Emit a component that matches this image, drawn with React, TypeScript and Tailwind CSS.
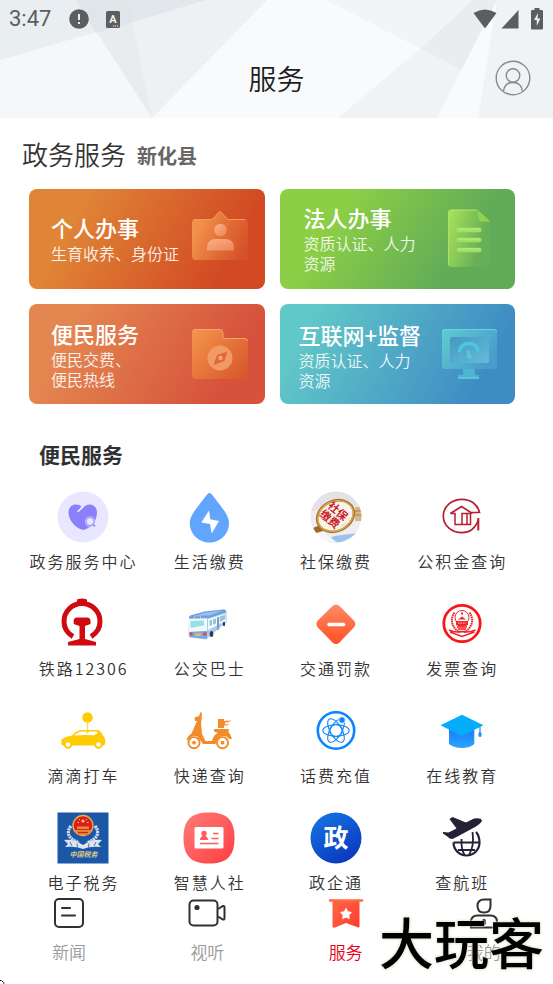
import type { ReactNode } from 'react'

const heroCards = [
  {
    title: '个人办事',
    lines: ['生育收养、身份证'],
    className: 'pl-[22px] bg-[linear-gradient(118deg,#e08536_20%,#d24a24_82%)]',
    icon: <PersonCardIcon />,
  },
  {
    title: '法人办事',
    lines: ['资质认证、人力', '资源'],
    className: 'pl-6 bg-[linear-gradient(124deg,#8ccf46_24%,#60aa58_76%)]',
    icon: <DocumentIcon />,
  },
  {
    title: '便民服务',
    lines: ['便民交费、', '便民热线'],
    className: 'pl-[22px] pt-0.5 bg-[linear-gradient(118deg,#e48650_18%,#d6523c_82%)]',
    icon: <FolderIcon />,
  },
  {
    title: '互联网+监督',
    lines: ['资质认证、人力', '资源'],
    className: 'pl-[19px] pt-1 bg-[linear-gradient(118deg,#61c8c8_12%,#3f8cc4_84%)]',
    icon: <MonitorIcon />,
  },
]

const services: { label: string; icon: ReactNode }[] = [
  { label: '政务服务中心', icon: <HeartIcon /> },
  { label: '生活缴费', icon: <DropIcon /> },
  { label: '社保缴费', icon: <SocialIcon /> },
  { label: '公积金查询', icon: <FundIcon /> },
  { label: '铁路12306', icon: <RailwayIcon /> },
  { label: '公交巴士', icon: <BusIcon /> },
  { label: '交通罚款', icon: <FineIcon /> },
  { label: '发票查询', icon: <InvoiceIcon /> },
  { label: '滴滴打车', icon: <TaxiIcon /> },
  { label: '快递查询', icon: <ScooterIcon /> },
  { label: '话费充值', icon: <AtomIcon /> },
  { label: '在线教育', icon: <CapIcon /> },
  { label: '电子税务', icon: <TaxIcon /> },
  { label: '智慧人社', icon: <IdCardIcon /> },
  { label: '政企通', icon: <GovIcon /> },
  { label: '查航班', icon: <FlightIcon /> },
]

const tabs = [
  { label: '新闻', icon: <NewsTabIcon />, active: false },
  { label: '视听', icon: <VideoTabIcon />, active: false },
  { label: '服务', icon: <ServiceTabIcon />, active: true },
  { label: '我的', icon: <MineTabIcon />, active: false },
]

function Tile({ children }: { children: ReactNode }) {
  return (
    <svg viewBox="0 0 52 52" className="w-[52px] h-[52px]" aria-hidden="true">
      {children}
    </svg>
  )
}

/* Hero card icons */

function PersonCardIcon() {
  return (
    <svg viewBox="0 0 56 60" className="w-14 h-[60px]" aria-hidden="true">
      <defs>
        <linearGradient id="pc" x1="0" y1="0.3" x2="1" y2="0.7">
          <stop offset="0.1" stopColor="#f2914a" />
          <stop offset="0.6" stopColor="#e06a35" />
          <stop offset="1" stopColor="#d65128" />
        </linearGradient>
        <linearGradient id="pp" x1="0" y1="0" x2="1" y2="1">
          <stop offset="0" stopColor="#fbb086" />
          <stop offset="1" stopColor="#ee8455" />
        </linearGradient>
      </defs>
      <path d="M4 10H20L28 2L36 10H52Q56 10 56 14V47Q56 51 52 51H4Q0 51 0 47V14Q0 10 4 10Z" fill="url(#pc)" />
      <path d="M2 10.500H20L28 2.500L36 10.500H53" fill="none" stroke="#f49a54" strokeWidth="1" />
      <circle cx="28.500" cy="21" r="6.200" fill="url(#pp)" />
      <path d="M15 41.500V39Q15 30 24 30H33Q42 30 42 39V41.500Z" fill="url(#pp)" />
    </svg>
  )
}

function DocumentIcon() {
  return (
    <svg viewBox="0 0 56 60" className="w-14 h-[60px]" aria-hidden="true">
      <defs>
        <linearGradient id="dc" x1="0" y1="0.2" x2="1" y2="0.6">
          <stop offset="0" stopColor="#a6df5c" />
          <stop offset="0.8" stopColor="#68b055" />
          <stop offset="1" stopColor="#66ae58" />
        </linearGradient>
      </defs>
      <path d="M9 0.500H36V12H48.500V55Q48.500 58 45 58H9Q6 58 6 55V4Q6 0.500 9 0.500Z" fill="url(#dc)" />
      <path d="M6.500 56V4Q6.500 1 10 1H35" fill="none" stroke="#a9e362" strokeWidth="1" />
      <path d="M36 1L48.500 12.500H40Q36 12.500 36 9Z" fill="#8fd152" />
      <path d="M16.500 21H37.500M16.500 31H37.500M16.500 41H37.500" stroke="#9fdf66" strokeWidth="4.300" strokeLinecap="round" />
      <path d="M16.500 20H37.500M16.500 30H37.500M16.500 40H37.500" stroke="#b0e97c" strokeWidth="1.500" strokeLinecap="round" />
    </svg>
  )
}

function FolderIcon() {
  return (
    <svg viewBox="0 0 56 60" className="w-14 h-[60px]" aria-hidden="true">
      <defs>
        <linearGradient id="fc" x1="0" y1="0.1" x2="1" y2="0.9">
          <stop offset="0" stopColor="#f2934a" />
          <stop offset="1" stopColor="#d9562c" />
        </linearGradient>
      </defs>
      <path d="M4 4H27Q31 4 31 8V13H52Q56 13 56 17V50Q56 54 52 54H4Q0 54 0 50V8Q0 4 4 4Z" fill="url(#fc)" />
      <path d="M1 7Q1 4.500 4 4.500H27Q31 4.500 31 8V13.500H52Q55 13.500 55.500 16" fill="none" stroke="#f5a468" strokeWidth="1" />
      <circle cx="28" cy="33" r="12.500" fill="#f29a66" />
      <path d="M35.500 26.500L32.500 36L21.500 40L25 30Z" fill="#de6a38" />
      <circle cx="28.500" cy="33" r="2.200" fill="#f7a878" />
    </svg>
  )
}

function MonitorIcon() {
  return (
    <svg viewBox="0 0 56 60" className="w-14 h-[60px]" aria-hidden="true">
      <defs>
        <linearGradient id="mc" x1="0" y1="0" x2="1" y2="0.6">
          <stop offset="0" stopColor="#60cdd2" />
          <stop offset="1" stopColor="#489ccc" />
        </linearGradient>
        <linearGradient id="ms" x1="0" y1="0" x2="1" y2="1">
          <stop offset="0" stopColor="#4597c2" />
          <stop offset="1" stopColor="#64bcd8" />
        </linearGradient>
      </defs>
      <path d="M21 42H33V49H37V52.500H16V49H21Z" fill="#4fb4d2" />
      <path d="M16.500 52H36.500" stroke="#5ccbe0" strokeWidth="1.500" strokeLinecap="round" />
      <rect x="0" y="3" width="55" height="40" rx="3" fill="url(#mc)" />
      <path d="M0.500 6Q0.500 3.500 3.500 3.500H51.500Q54.500 3.500 54.500 6" fill="none" stroke="#66d6dc" strokeWidth="1" />
      <rect x="8" y="11" width="39" height="26" rx="2" fill="url(#ms)" />
      <path d="M17.500 25Q19.500 17.500 27 17.500T36 24" fill="none" stroke="#4fc6de" strokeWidth="3.500" strokeLinecap="round" />
      <path d="M25.500 23L30 31Q28 35 25 31Z" fill="#52cbe0" />
    </svg>
  )
}

/* Service icons */

function HeartIcon() {
  return (
    <Tile>
      <circle cx="26" cy="26" r="25.500" fill="#e8e7ff" />
      <path d="M26 39C18 37 11.500 29 11.500 21.500C11.500 16 15.500 13.500 19 13.500C21.500 13.500 23.500 14.200 24.500 15.500L20 20.500L21 21.500L25.500 17.500C27.500 14.800 30 13.500 32.500 13.500C37 13.500 40 17 40 21.500C40 30 34 37.500 26 39Z" fill="#8b80fb" />
      <circle cx="33" cy="30.500" r="5.200" fill="#c4beff" />
      <circle cx="33" cy="30.500" r="4" fill="#e8e7ff" stroke="#9b91fc" strokeWidth="1" />
      <path d="M36 33.500L38 35.500" stroke="#8b80fb" strokeWidth="1.400" />
    </Tile>
  )
}

function DropIcon() {
  return (
    <Tile>
      <path d="M26.500 2C28 2 29.500 4 32 7.500C38 15.500 46 24 46 32C46 43.500 37 51.500 26.500 51.500S6.800 43.500 6.800 32C6.800 24 15 15.500 21 7.500C23.500 4 25 2 26.500 2Z" fill="#61a5ff" />
      <path d="M26 19.500L18.300 31.500L27 33L28.700 42.500L36 30L27.300 28.300Z" fill="#fff" />
    </Tile>
  )
}

function SocialIcon() {
  return (
    <Tile>
      <defs>
        <clipPath id="so">
          <circle cx="26" cy="26" r="25.500" />
        </clipPath>
      </defs>
      <g clipPath="url(#so)">
        <rect width="52" height="52" fill="#efedf1" />
        <path d="M0 0H52V17L30 12L0 21Z" fill="#e4e2e8" />
        <path d="M12 52L24 45L48 42L52 52Z" fill="#9cc2ec" />
        <path d="M0 34L14 42L28 52H0Z" fill="#f6f5f8" />
        <path d="M30 52L44 45L52 43V52Z" fill="#dfeaf8" />
        <rect x="45" y="16" width="7" height="14" fill="#d9b48c" />
        <path d="M45 20H52M45 24H52" stroke="#a98258" strokeWidth="1" />
        <path d="M3 37L10 34L13 40L6 42Z" fill="#9c6a24" />
        <ellipse cx="25.500" cy="25" rx="19" ry="15" transform="rotate(-25 25.500 25)" fill="#fbf4ec" stroke="#a87426" strokeWidth="2.600" />
        <ellipse cx="25.500" cy="25" rx="18.400" ry="14.600" transform="rotate(-25 25.500 25)" fill="none" stroke="#e2b659" strokeWidth="1" />
        <path d="M29 36Q38 35 41 23L37 31Z" fill="#ecd2b2" />
      </g>
      <g fill="#c81e28" fontSize="11" fontWeight="700" fontFamily="Noto Sans CJK SC, sans-serif" transform="rotate(40 24 24)">
        <text x="13.500" y="22.500">社保</text>
        <text x="12.500" y="34">缴费</text>
      </g>
    </Tile>
  )
}

function FundIcon() {
  return (
    <Tile>
      <g fill="none" stroke="#b5202f" strokeWidth="1.700">
        <path d="M36 21.500H43.500C41.500 13 34.500 8.300 26 8.300C15.500 8.300 7.300 15.500 7.300 25S15.500 41.700 26 41.700C33 41.700 39 38 42.500 29" />
        <path d="M42.300 27V39.500" strokeWidth="2" />
        <path d="M14.500 22.500L25.500 15.500L36.500 22.500" />
        <path d="M14.500 22.500H19V33.500H34.500V22.500H26V33.500M31 22.500V33.500" strokeWidth="1.500" />
      </g>
    </Tile>
  )
}

function RailwayIcon() {
  return (
    <Tile>
      <path d="M16 38.500C10 35 7 30 7 23.500C7 13.500 15 5.500 25 5.500S43 13.500 43 23.500C43 30 40 35 34 38.500" fill="none" stroke="#cf0a10" strokeWidth="5" />
      <path d="M20 1.500Q25 -0.500 30 1.500V5H20Z" fill="#cf0a10" />
      <path d="M20 19.500H30Q33.500 19.500 33.500 23V26L28 28V41L39 44V47.500H11V44L22.500 41V28L16.700 26V23Q16.700 19.500 20 19.500Z" fill="#cf0a10" />
    </Tile>
  )
}

function BusIcon() {
  return (
    <Tile>
      <path d="M6 20Q6 17.500 9 17L22 13.500L41 11.500Q43.500 11.500 43.500 14V24L27 38L23 41.500L7 39.500Q5.500 39 5.500 37Z" fill="#a9caf0" />
      <path d="M6 20Q6 17.500 9 17L22 13.500L41 11.500Q43 11.500 43.500 14L26 20L6 20.500Z" fill="#6f9fe0" />
      <path d="M10 18L23 14.500L40 12.500L27 17.500Z" fill="#98bff0" />
      <path d="M6 21L24 20.500V33L6 34Z" fill="#f2f9fd" />
      <path d="M7.500 23L21 22.500V27.500Q15 28 7.500 30Z" fill="#9adfe2" />
      <path d="M25 21L43 15.500V23L25 32Z" fill="#f4f8fc" />
      <path d="M26.500 22.500L29 21.700V27L26.500 28ZM30 21.500L33 20.500V25.500L30 26.700ZM37 18.500L42.500 16.500V21L37 24Z" fill="#8ec9d6" />
      <path d="M34 19.500L36.200 18.800V31L34 32.500Z" fill="#7c9cc8" />
      <path d="M6 34L24 33V41L7 39Z" fill="#7aa7e3" />
      <path d="M12 35.500H18V38H12Z" fill="#f0b64f" />
      <path d="M7 34.500H9.500V37.500H7ZM20.500 34.500H23.500V37.500H20.500Z" fill="#e0453c" />
      <ellipse cx="28.500" cy="36" rx="1.800" ry="3" fill="#333a4a" />
      <ellipse cx="41" cy="26" rx="1.200" ry="2.200" fill="#333a4a" />
      <path d="M11 19.300H18" stroke="#d6e5f8" strokeWidth="1.400" />
      <path d="M12 19.300H17" stroke="#39517d" strokeWidth="0.700" />
    </Tile>
  )
}

function FineIcon() {
  return (
    <Tile>
      <defs>
        <linearGradient id="fi" x1="0" y1="0" x2="0" y2="1">
          <stop offset="0" stopColor="#ff8a68" />
          <stop offset="1" stopColor="#ff5122" />
        </linearGradient>
      </defs>
      <path d="M22.500 8Q26 4.800 29.500 8L43.800 22.500Q47 26 43.800 29.500L29.500 44.500Q26 47.500 22.500 44.500L7.800 29.500Q4.800 26 7.800 22.500Z" fill="url(#fi)" />
      <path d="M19 26.500H33.500" stroke="#fff" strokeWidth="3.500" strokeLinecap="round" />
    </Tile>
  )
}

function InvoiceIcon() {
  return (
    <Tile>
      <circle cx="26" cy="25.500" r="18.200" fill="none" stroke="#f9161b" strokeWidth="2.800" />
      <g fill="none" stroke="#f0252a">
        <circle cx="26" cy="19.500" r="7" strokeWidth="1" />
        <path d="M18.500 14.500Q14.500 20 16.500 26T24 34M33.500 14.500Q37.500 20 35.500 26T28 34" strokeWidth="2" strokeDasharray="1.600 0.600" />
        <path d="M13 32Q19 35 26 33.500Q33 35 39.500 32M14 34L26 38.500L38.500 34" strokeWidth="1.500" />
        <path d="M21 29H31M22 31H30" strokeWidth="1.300" />
      </g>
      <path d="M20 23H32V27Q26 30 20 27Z" fill="#f0252a" />
      <path d="M22 21.500L26 18.500L30 21.500ZM25 14.500H27V16.500H25Z" fill="#f0252a" />
      <path d="M22 25H30" stroke="#fff" strokeWidth="0.800" strokeDasharray="1.500 1" />
    </Tile>
  )
}

function TaxiIcon() {
  return (
    <Tile>
      <circle cx="30.500" cy="12.500" r="5.200" fill="#ffcc00" />
      <path d="M30.500 17V27" stroke="#ffda4a" strokeWidth="1.300" />
      <path d="M4.500 34.500Q8 31.500 15 30.500Q20 25 24.500 25H40Q43 25 44.500 28L48 33.500Q49 37 47.500 40.500H5Q4 37.500 4.500 34.500Z" fill="#ffcc00" />
      <path d="M17.500 30.500Q21 26.500 25 26.500H39.500L41 28L37 30.200L28 30Z" fill="#fff" />
      <path d="M30.500 26V28" stroke="#ffda4a" strokeWidth="2.400" />
      <circle cx="11" cy="39.500" r="3.300" fill="#fff" stroke="#ffcc00" strokeWidth="1.900" />
      <circle cx="41.500" cy="39.500" r="3.300" fill="#fff" stroke="#ffcc00" strokeWidth="1.900" />
    </Tile>
  )
}

function ScooterIcon() {
  return (
    <Tile>
      <g fill="#f18c28">
        <path d="M11.500 12.500L16 11L17.500 7L18.800 8V12.500L18 18L19 29L22.500 36H29Q31 29 35 28L31 26.500V24H46L45.500 27Q48 30 49 34H46.500Q43 29.500 38 31.500Q33.500 33.500 32.500 39H20L14.500 31.500Q8 29.500 5 35.500L3.500 34.500Q5 30.500 8.500 28.500L14 16H12Z" />
        <path d="M35 14H41V16H47L45 17.500H42V19H45.500L44 20.500H41V23H35Z" />
      </g>
      <path d="M42 16H48M42 19.500H46" stroke="#f7b270" strokeWidth="1" />
      <g fill="#fff" stroke="#f18c28" strokeWidth="1.900">
        <circle cx="11" cy="37.700" r="5.600" />
        <circle cx="39.500" cy="37.700" r="5.600" />
      </g>
      <circle cx="11" cy="37.700" r="1.900" fill="#f18c28" />
      <circle cx="39.500" cy="37.700" r="1.900" fill="#f18c28" />
    </Tile>
  )
}

function AtomIcon() {
  return (
    <Tile>
      <g fill="none" stroke="#0a84ff">
        <circle cx="26" cy="25.500" r="18.200" strokeWidth="2.600" />
        <g strokeWidth="1.100">
          <ellipse cx="26" cy="25.500" rx="13.200" ry="5.800" />
          <ellipse cx="26" cy="25.500" rx="13.200" ry="5.800" transform="rotate(60 26 25.500)" />
          <ellipse cx="26" cy="25.500" rx="13.200" ry="5.800" transform="rotate(120 26 25.500)" />
          <circle cx="26" cy="25.500" r="6.300" />
        </g>
      </g>
      <circle cx="32" cy="15" r="3.300" fill="#0a84ff" stroke="#fff" strokeWidth="0.800" />
    </Tile>
  )
}

function CapIcon() {
  return (
    <Tile>
      <defs>
        <linearGradient id="cp" x1="0" y1="0" x2="0" y2="1">
          <stop offset="0.3" stopColor="#1a86fb" />
          <stop offset="1" stopColor="#2fa4ff" />
        </linearGradient>
      </defs>
      <path d="M13 22H38.300V39Q34 43 26 43T13 39Z" fill="url(#cp)" />
      <path d="M26 9.700L47.500 20.300L26 31L4.500 20.300Z" fill="#05acfb" />
      <path d="M44 22V29" stroke="#1795fd" strokeWidth="1.300" />
      <path d="M44 28.500V30.500" stroke="#1795fd" strokeWidth="3" strokeLinecap="round" />
    </Tile>
  )
}

function TaxIcon() {
  return (
    <Tile>
      <rect x="0.500" y="0.500" width="51" height="51" fill="#1b57a7" />
      <path d="M14 14Q6 24 22 31M38 14Q46 24 30 31" fill="none" stroke="#d5dce6" strokeWidth="3.200" strokeDasharray="2.200 0.600" />
      <path d="M7 28Q17 27 26 33Q35 27 45 28L41 32L44 35Q33 34 26 37Q19 34 8 35L11 32Z" fill="#dfe5ec" />
      <path d="M13 30L15 34M20 31.500L20.500 35M32 31.500L31.500 35M39 30L37 34" stroke="#1b57a7" strokeWidth="0.800" />
      <circle cx="26" cy="13.500" r="10" fill="#dd1c1f" stroke="#e3b04b" strokeWidth="1.400" />
      <path d="M20 14.500H32V17H20ZM18 18H34L32 23H20Z" fill="#e58a38" />
      <path d="M21 20.500H31" stroke="#dd1c1f" strokeWidth="1.300" />
      <circle cx="26" cy="9" r="1.600" fill="#f6d24a" />
      <path d="M20.500 10.500H22M30 10.500H31.500M22 7.500H23M29 7.500H30" stroke="#f6d24a" strokeWidth="1" />
      <text x="26.500" y="44.500" textAnchor="middle" fontSize="7" fontStyle="italic" fontWeight="700" fontFamily="Noto Sans CJK SC, sans-serif" fill="#ddc68a">
        中国税务
      </text>
    </Tile>
  )
}

function IdCardIcon() {
  return (
    <Tile>
      <defs>
        <linearGradient id="id" x1="0" y1="0" x2="1" y2="1">
          <stop offset="0" stopColor="#ff7c78" />
          <stop offset="1" stopColor="#ff3d42" />
        </linearGradient>
      </defs>
      <path d="M26 0.500C44 0.500 51.500 8 51.500 26S44 51.500 26 51.500S0.500 44 0.500 26S8 0.500 26 0.500Z" fill="url(#id)" />
      <rect x="11.500" y="15" width="29" height="21.500" rx="1.500" fill="#fff" />
      <circle cx="21" cy="21.500" r="2.700" fill="#ff5a5c" />
      <path d="M17 28Q17 24.500 20 24H22Q25 24.500 25 28Z" fill="#ff5a5c" />
      <path d="M30 21.500H35.500M28.500 26.500H35.500M17 31.500H35.500" stroke="#ff5a5c" strokeWidth="1.600" />
    </Tile>
  )
}

function GovIcon() {
  return (
    <Tile>
      <defs>
        <linearGradient id="gv" x1="0.200" y1="0" x2="0.800" y2="1">
          <stop offset="0" stopColor="#1573e2" />
          <stop offset="1" stopColor="#0a35bd" />
        </linearGradient>
      </defs>
      <circle cx="26" cy="26" r="25.500" fill="url(#gv)" />
      <text x="26" y="35" textAnchor="middle" fontSize="25" fontWeight="700" fontFamily="Noto Sans CJK SC, sans-serif" fill="#fff">
        政
      </text>
    </Tile>
  )
}

function FlightIcon() {
  return (
    <Tile>
      <g fill="none" stroke="#232136" strokeWidth="1.800">
        <path d="M40 20Q43.500 24 43.500 30.500A13 13 0 0 1 17.500 30.500" strokeWidth="2.200" />
        <path d="M17.500 30.500H43.500M25.500 27Q25 37 28.500 43M36.500 20Q38.500 34 33 43M22 38H39" />
      </g>
      <path
        d="M13.500 7L16.500 5L30 10.500L38 6.500Q45 5.500 46 8.500Q45.500 11 40 14.500L22.500 24L16.500 27Q13 27 12 25L7 21.500V20L12.500 20.500L20.500 16.500Z"
        fill="#232136"
      />
    </Tile>
  )
}

/* Tab bar icons */

function NewsTabIcon() {
  return (
    <svg viewBox="0 0 38 32" className="w-[38px] h-8" fill="none" stroke="#303133" strokeWidth="2" aria-hidden="true">
      <rect x="5" y="2" width="28" height="28" rx="4" />
      <path d="M12 11H20M12 18.500H25" strokeLinecap="round" />
    </svg>
  )
}

function VideoTabIcon() {
  return (
    <svg viewBox="0 0 38 32" className="w-[38px] h-8" fill="none" stroke="#303133" strokeWidth="2" aria-hidden="true">
      <rect x="1.500" y="3.500" width="28" height="25" rx="4" />
      <path d="M30 12L35 9Q36.500 8.500 36.500 10.500V21Q36.500 23 35 22.500L30 19.500" />
      <circle cx="9" cy="10.500" r="1.600" fill="#303133" />
    </svg>
  )
}

function ServiceTabIcon() {
  return (
    <svg viewBox="0 0 38 32" className="w-[38px] h-8" aria-hidden="true">
      <defs>
        <linearGradient id="st" x1="0" y1="0" x2="1" y2="1">
          <stop offset="0" stopColor="#ff6a45" />
          <stop offset="1" stopColor="#ff3a30" />
        </linearGradient>
      </defs>
      <path d="M5.500 3H32.500V29Q32.500 31.500 30 30L19 26L8 30.500Q5.500 31.500 5.500 29Z" fill="url(#st)" />
      <path d="M3 3.500H35" stroke="#ff6a45" strokeWidth="2.400" strokeLinecap="round" />
      <path d="M19 11.500L20.700 14.800L24.300 15.400L21.800 18L22.300 21.600L19 20L15.700 21.600L16.200 18L13.700 15.400L17.300 14.800Z" fill="#fff" stroke="#fff" strokeWidth="1" strokeLinejoin="round" />
    </svg>
  )
}

function MineTabIcon() {
  return (
    <svg viewBox="0 0 38 32" className="w-[38px] h-8" fill="none" stroke="#303133" strokeWidth="2" aria-hidden="true">
      <path d="M25.500 2.500V9Q25.500 15.500 19 15.500T12.500 9Q12.500 2.500 19 2.500Z" />
      <path d="M6 30.500V25Q6 18.500 12.500 18.500H25.500Q32 18.500 32 25V30.500Z" />
      <path d="M19 23.500V26.500" strokeWidth="3.500" strokeLinecap="round" />
    </svg>
  )
}

function StatusBar() {
  return (
    <div className="flex h-[38px] items-center justify-between pl-[9px] pr-[10px] text-[#5c5d5e]">
      <div className="flex items-center">
        <span className="font-['Roboto'] text-[22px] leading-none font-normal">3:47</span>
        <svg viewBox="0 0 20 20" className="ml-[18px] h-5 w-5" aria-hidden="true">
          <circle cx="10" cy="10" r="9.800" fill="currentColor" />
          <path d="M10 5V11M10 13V15" stroke="#e8ecef" strokeWidth="2" />
        </svg>
        <svg viewBox="0 0 14 17" className="ml-[17px] h-[17px] w-[14px]" aria-hidden="true">
          <rect width="14" height="17" rx="1.500" fill="currentColor" />
          <text x="7" y="12" textAnchor="middle" fontSize="11" fontWeight="700" fontFamily="Roboto, sans-serif" fill="#eef1f3">
            A
          </text>
          <path d="M7 15H13" stroke="#eef1f3" strokeWidth="1" strokeDasharray="1.200 0.800" />
        </svg>
      </div>
      <div className="flex items-center">
        <svg viewBox="0 0 24 20" className="h-5 w-6" fill="currentColor" aria-hidden="true">
          <path d="M0.500 4Q12 -3 23.500 4L12 19.500Z" />
        </svg>
        <svg viewBox="0 0 18 20" className="ml-1 h-5 w-[18px]" fill="currentColor" aria-hidden="true">
          <path d="M17.500 1V19.500H0.500Z" />
        </svg>
        <svg viewBox="0 0 12 22" className="ml-3 h-[22px] w-3" aria-hidden="true">
          <path d="M3.500 0H8.500V2H11Q12 2 12 3.500V20Q12 21.500 11 21.500H1Q0 21.500 0 20V3.500Q0 2 1 2H3.500Z" fill="currentColor" />
          <path d="M7 5L3 12H5.800V18L9.300 10.500H6.500Z" fill="#eef2f4" />
        </svg>
      </div>
    </div>
  )
}

function HeaderBackdrop() {
  return (
    <svg viewBox="0 0 553 118" preserveAspectRatio="none" className="absolute inset-0 -z-10 h-full w-full" aria-hidden="true">
      <rect width="553" height="118" fill="#f9fafc" />
      <path d="M0 0H267L152 118H0Z" fill="#f6f7f9" />
      <path d="M0 0H206L0 60Z" fill="#e9eef1" />
      <path d="M128 0H267L152 118Z" fill="#eff0f4" />
      <path d="M76 0H128L152 118Z" fill="#e8ecef" />
      <path d="M128 0H206L133 22Z" fill="#e2e7eb" />
      <path d="M76 0H128L133 22L96 33Z" fill="#dfe5e8" />
      <path d="M326 0H497L463 70.500Z" fill="#f3f4f6" />
      <path d="M420 49L463 70.500L440 118H338Z" fill="#f1f2f4" />
      <path d="M473 0H497L463 70.500L420 49Z" fill="#e9edf0" />
      <path d="M497 0L478 118H437Z" fill="#f9fafc" />
      <path d="M497 0H553V118H478Z" fill="#eff3f6" />
    </svg>
  )
}

export default function App() {
  return (
    <div lang="zh-CN" className="relative flex min-h-screen flex-col bg-white font-['Noto_Sans_CJK_SC',sans-serif] font-[350]">
      <header className="relative isolate h-[118px]">
        <HeaderBackdrop />
        <StatusBar />
        <div className="grid h-20 grid-cols-[1fr_auto_1fr] items-center px-[22px]">
          <h1 className="col-start-2 text-[28px] leading-10 text-[#1c1d1f]">服务</h1>
          <button type="button" aria-label="个人中心" className="justify-self-end">
            <svg viewBox="0 0 36 36" className="h-9 w-9" fill="none" stroke="#88898b" strokeWidth="1.400" aria-hidden="true">
              <circle cx="18" cy="18" r="16.800" />
              <circle cx="18" cy="15.500" r="6.800" />
              <path d="M8.500 31.500Q9.500 22.500 18 22.500T27.500 31.500" />
            </svg>
          </button>
        </div>
      </header>

      <main className="flex-1">
        {/* Government services */}
        <section className="pt-[18px]">
          <div className="flex items-center gap-[11px] pl-[22px]">
            <h2 className="text-[26px] leading-9 text-[#333]">政务服务</h2>
            <span className="pt-1 text-xl leading-8 font-bold text-[#666]">新化县</span>
          </div>
          <div className="mt-[17px] grid grid-cols-2 gap-[15px] pl-[29px] pr-[38px]">
            {heroCards.map((card) => (
              <button
                key={card.title}
                type="button"
                className={`flex h-[100px] items-center justify-between rounded-lg pr-[17px] text-left text-white ${card.className}`}
              >
                <span className="whitespace-nowrap">
                  <span className="mb-1 block text-[22px] leading-6 font-medium">{card.title}</span>
                  {card.lines.map((line) => (
                    <span key={line} className="block text-base leading-5 opacity-90">{line}</span>
                  ))}
                </span>
                {card.icon}
              </button>
            ))}
          </div>
        </section>

        {/* Convenience services */}
        <section className="mt-[34px]">
          <h2 className="pl-[39px] text-[21px] leading-8 font-bold text-[#303133]">便民服务</h2>
          <div className="mt-[21px] grid grid-cols-4 gap-y-[25px] pl-5 pr-7">
            {services.map((service) => (
              <button key={service.label} type="button" className="flex flex-col items-center gap-1.5">
                {service.icon}
                <span className="whitespace-nowrap pl-px text-base leading-6 tracking-[2px] text-[#333]">{service.label}</span>
              </button>
            ))}
          </div>
        </section>
      </main>

      <nav className="relative grid grid-cols-4 bg-white pt-0.5 pb-5">
        {tabs.map((tab) => (
          <a
            key={tab.label}
            href="#"
            aria-current={tab.active ? 'page' : undefined}
            className={`flex flex-col items-center gap-[11px] text-[17px] leading-6 ${tab.active ? 'text-[#e60012]' : 'text-[#999]'}`}
          >
            {tab.icon}
            <span>{tab.label}</span>
          </a>
        ))}
        <span className="pointer-events-none absolute right-[9px] bottom-3 text-[55px] leading-[64px] font-medium text-black [text-shadow:0_0_2px_#fffbe0,0_0_3px_#b8b49a]">
          大玩客
        </span>
        <svg viewBox="0 0 6 6" className="absolute bottom-0 left-0 h-1.5 w-1.5" aria-hidden="true">
          <path d="M0 2.500H1.500M2 3.500H3M3 5H4.500" stroke="#000" strokeWidth="1" />
        </svg>
      </nav>
    </div>
  )
}
